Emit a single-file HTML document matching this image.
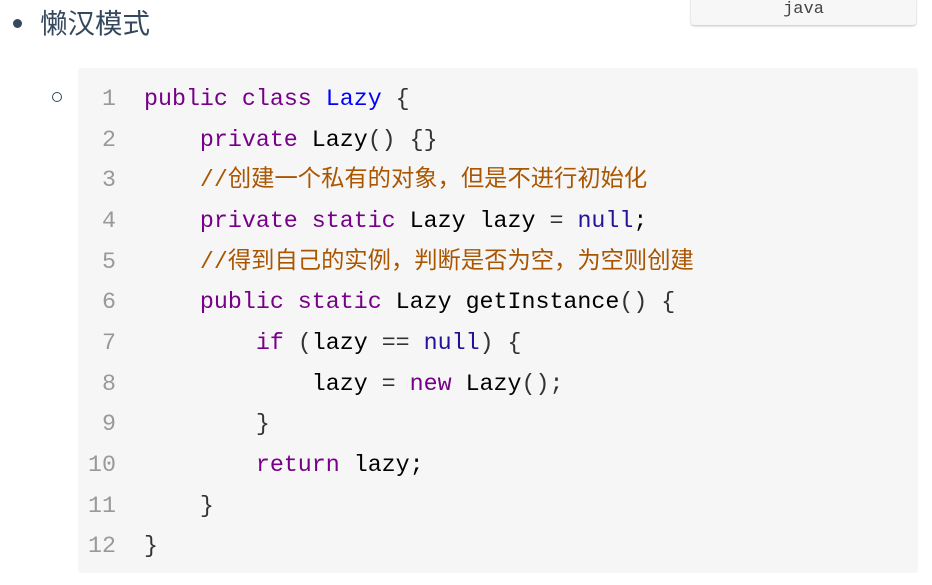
<!DOCTYPE html>
<html><head><meta charset="utf-8"><style>
body{margin:0;width:932px;height:585px;background:#fff;position:relative;overflow:hidden;font-family:"Liberation Sans","Noto Sans CJK SC",sans-serif}
.h{position:absolute;left:40px;top:4px;font-size:27.5px;color:#34495e;line-height:40px}
.dot{position:absolute;left:13px;top:19px;width:9px;height:9px;border-radius:50%;background:#34495e}
.circ{position:absolute;left:52px;top:92px;width:8px;height:8px;border-radius:50%;border:1.5px solid #34495e}
.tab{position:absolute;left:691px;top:-4px;width:225px;height:29px;background:#f7f7f7;border-radius:3px;box-shadow:0 1px 2px rgba(0,0,0,.25);font-family:"Liberation Mono",monospace;font-size:17px;color:#444;text-align:center;line-height:28px}
.code{position:absolute;left:78px;top:68px;width:840px;height:505px;background:#f6f6f6;border-radius:3px}
pre{position:absolute;left:66px;top:11px;margin:0;font-family:"Liberation Mono","Noto Sans CJK SC",monospace;font-size:23.3px;line-height:40.65px;color:#000}
.k{color:#770088}.d{color:#0000ff}.c{color:#aa5500}.n{color:#221199}.p{color:#333}
</style></head><body>
<div class="dot"></div><div class="h">懒汉模式</div>
<div class="tab">java</div>
<div class="circ"></div>
<div class="code">
<pre style="left:0;width:38px;text-align:right;color:#999">1
2
3
4
5
6
7
8
9
10
11
12</pre>
<pre><span class="k">public</span> <span class="k">class</span> <span class="d">Lazy</span> <span class="p">{</span>
    <span class="k">private</span> Lazy<span class="p">() {}</span>
    <span class="c">//创建一个私有的对象，但是不进行初始化</span>
    <span class="k">private</span> <span class="k">static</span> Lazy lazy <span class="p">=</span> <span class="n">null</span>;
    <span class="c">//得到自己的实例，判断是否为空，为空则创建</span>
    <span class="k">public</span> <span class="k">static</span> Lazy getInstance<span class="p">() {</span>
        <span class="k">if</span> <span class="p">(</span>lazy <span class="p">==</span> <span class="n">null</span><span class="p">) {</span>
            lazy <span class="p">=</span> <span class="k">new</span> Lazy<span class="p">();</span>
        <span class="p">}</span>
        <span class="k">return</span> lazy;
    <span class="p">}</span>
<span class="p">}</span></pre>
</div>
</body></html>
